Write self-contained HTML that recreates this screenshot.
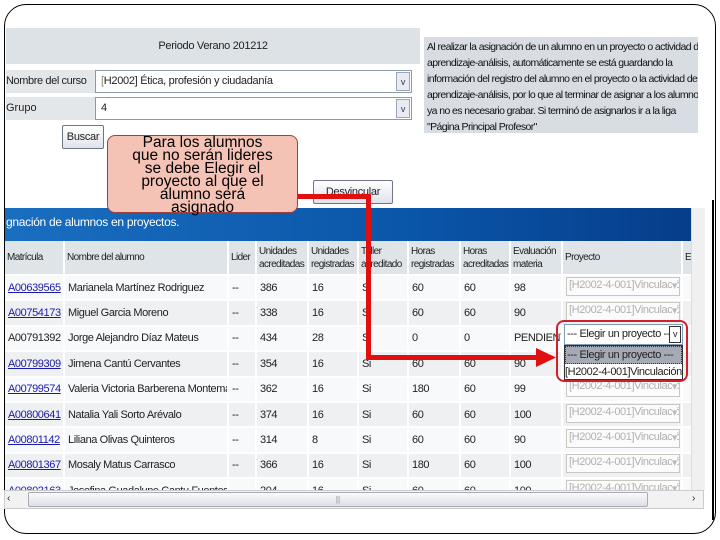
<!DOCTYPE html>
<html><head><meta charset="utf-8"><style>
*{margin:0;padding:0;box-sizing:border-box}
body{width:720px;height:540px;background:#fff;position:relative;overflow:hidden;font-family:"Liberation Sans",sans-serif;font-size:11px;color:#222}
.a{position:absolute}
.sel{position:absolute;background:#fff;border:1px solid #8a9aab;height:23px;font-size:11px;letter-spacing:-0.3px;padding:4px 5px;white-space:nowrap}
.sel .ar{position:absolute;right:1px;top:1px;width:14px;height:19px;background:#e8ecf2;border:1px solid #9aa6b6;font-size:9px;text-align:center;line-height:18px;color:#335}
.btn{position:absolute;background:linear-gradient(#fff,#dfe3ea);border:1px solid #6d7787;border-radius:2px;font-size:11px;letter-spacing:-0.3px;text-align:center;line-height:22px;overflow:hidden;white-space:nowrap}
.wrap{position:absolute;left:5px;top:241px;width:686px;height:249px;overflow:hidden}
table{border-collapse:collapse;font-size:11px;letter-spacing:-0.4px;table-layout:fixed;width:702px}
td{height:25.4px;padding:0 3px;border-right:2px solid #fff;border-bottom:2px solid #fff;white-space:nowrap;overflow:hidden}
tr:nth-child(odd) td{background:#eef0f2}
tr:nth-child(even) td{background:#f8f9fa}
tr.h td{background:#dfe4e8;height:34px;line-height:13px;white-space:normal;font-size:10px;letter-spacing:-0.6px;padding:0 2px}
a{color:#1a1aa8}
.ds{display:inline-block;width:114px;border:1px solid #c8c8c0;color:#b0b0b0;padding:1px 2px;font-size:11px;position:relative;background:#fbfbfb;overflow:hidden;height:19px}
.ds:after{content:"▾";position:absolute;right:2px;top:1px;color:#bbb;background:#fbfbfb}
</style></head><body>
<div class="a" style="left:4px;top:4px;width:712px;height:530px;border:1px solid #000;border-radius:22px"></div>
<div class="a" style="left:6px;top:28px;width:414px;height:36px;background:#dde2e6;text-align:center;line-height:36px;font-size:11px;letter-spacing:-0.3px">Periodo Verano 201212</div>
<div class="a" style="left:6px;top:70px;width:89px;height:23px;background:#e3e7ea;font-size:11px;letter-spacing:-0.4px;line-height:23px;white-space:nowrap">Nombre del curso</div>
<div class="sel" style="left:95px;top:70px;width:317px"><span style="color:#886">[</span>H2002] Ética, profesión y ciudadanía<div class="ar">v</div></div>
<div class="a" style="left:6px;top:97px;width:89px;height:23px;background:#e3e7ea;font-size:11px;line-height:23px">Grupo</div>
<div class="sel" style="left:95px;top:97px;width:317px">4<div class="ar">v</div></div>
<div class="btn" style="left:62px;top:125px;width:42px;height:24px">Buscar</div>
<div class="btn" style="left:313px;top:180px;width:80px;height:24px">Desvincular</div>
<div class="a" style="left:424px;top:37px;width:274px;height:96px;background:#d8dde3;font-size:10.5px;letter-spacing:-0.6px;line-height:16px;padding:2px 3px;color:#111;white-space:nowrap;overflow:hidden">Al realizar la asignación de un alumno en un proyecto o actividad de<br>aprendizaje-análisis, automáticamente se está guardando la<br>información del registro del alumno en el proyecto o la actividad de<br>aprendizaje-análisis, por lo que al terminar de asignar a los alumnos<br>ya no es necesario grabar. Si terminó de asignarlos ir a la liga<br>"Página Principal Profesor"</div>
<div class="a" style="left:5px;top:208px;width:686px;height:33px;background:linear-gradient(90deg,#1a6ec0,#0a55a8 60%,#063d8a);color:#fff;font-size:12px;letter-spacing:-0.3px;line-height:28px;padding-left:1px">gnación de alumnos en proyectos.</div>
<div class="a" style="left:691px;top:208px;width:14px;height:282px;background:#f0f0f0;border-left:1px solid #ddd"></div>
<div class="wrap"><table>
<colgroup><col style="width:59px"><col style="width:164px"><col style="width:28px"><col style="width:52px"><col style="width:50px"><col style="width:50px"><col style="width:52px"><col style="width:50px"><col style="width:52px"><col style="width:120px"><col style="width:25px"></colgroup>
<tr class="h"><td>Matrícula</td><td>Nombre del alumno</td><td>Lider</td><td>Unidades acreditadas</td><td>Unidades registradas</td><td>Taller acreditado</td><td>Horas registradas</td><td>Horas acreditadas</td><td>Evaluación materia</td><td>Proyecto</td><td>Ex</td></tr>
<tr><td><a href="#">A00639565</a></td><td>Marianela Martínez Rodriguez</td><td>--</td><td>386</td><td>16</td><td>Si</td><td>60</td><td>60</td><td>98</td><td><span class="ds">[H2002-4-001]Vinculació</span></td><td></td></tr>
<tr><td><a href="#">A00754173</a></td><td>Miguel Garcia Moreno</td><td>--</td><td>338</td><td>16</td><td>Si</td><td>60</td><td>60</td><td>90</td><td><span class="ds">[H2002-4-001]Vinculació</span></td><td></td></tr>
<tr><td>A00791392</td><td>Jorge Alejandro Díaz Mateus</td><td>--</td><td>434</td><td>28</td><td>Si</td><td>0</td><td>0</td><td>PENDIENTE</td><td></td><td></td></tr>
<tr><td><a href="#">A00799309</a></td><td>Jimena Cantú Cervantes</td><td>--</td><td>354</td><td>16</td><td>Si</td><td>60</td><td>60</td><td>90</td><td></td><td></td></tr>
<tr><td><a href="#">A00799574</a></td><td>Valeria Victoria Barberena Montemayor</td><td>--</td><td>362</td><td>16</td><td>Si</td><td>180</td><td>60</td><td>99</td><td><span class="ds">[H2002-4-001]Vinculació</span></td><td></td></tr>
<tr><td><a href="#">A00800641</a></td><td>Natalia Yali Sorto Arévalo</td><td>--</td><td>374</td><td>16</td><td>Si</td><td>60</td><td>60</td><td>100</td><td><span class="ds">[H2002-4-001]Vinculació</span></td><td></td></tr>
<tr><td><a href="#">A00801142</a></td><td>Liliana Olivas Quinteros</td><td>--</td><td>314</td><td>8</td><td>Si</td><td>60</td><td>60</td><td>90</td><td><span class="ds">[H2002-4-001]Vinculació</span></td><td></td></tr>
<tr><td><a href="#">A00801367</a></td><td>Mosaly Matus Carrasco</td><td>--</td><td>366</td><td>16</td><td>Si</td><td>180</td><td>60</td><td>100</td><td><span class="ds">[H2002-4-001]Vinculació</span></td><td></td></tr>
<tr><td><a href="#">A00802163</a></td><td>Josefina Guadalupe Cantu Fuentes</td><td>--</td><td>204</td><td>16</td><td>Si</td><td>60</td><td>60</td><td>100</td><td><span class="ds">[H2002-4-001]Vinculació</span></td><td></td></tr>
</table></div>
<div class="a" style="left:4px;top:490px;width:700px;height:19px;background:#f2f2f2;border:1px solid #ccc"></div>
<div class="a" style="left:28px;top:492px;width:620px;height:15px;background:linear-gradient(#fafafa,#dde0e4);border:1px solid #aab;border-radius:2px;text-align:center;font-size:8px;line-height:13px;color:#888">||</div>
<div class="a" style="left:7px;top:493px;font-size:10px">‹</div>
<div class="a" style="left:692px;top:493px;font-size:10px">›</div>
<div class="a" style="left:712px;top:200px;width:2px;height:320px;background:#000"></div>
<div class="a" style="left:564px;top:324px;width:119px;height:21px;background:#fff;border:1px solid #7f9db9;font-size:11px;letter-spacing:-0.4px;line-height:19px;padding-left:2px;white-space:nowrap;overflow:hidden">--- Elegir un proyecto ---<div style="position:absolute;right:1px;top:1px;width:12px;height:17px;border:1px solid #333;font-size:9px;text-align:center;line-height:15px;background:#fff">v</div></div>
<div class="a" style="left:564px;top:345px;width:119px;height:35px;background:#fff;border:1px solid #333;font-size:11px;letter-spacing:-0.4px;line-height:16px;overflow:hidden;white-space:nowrap"><div style="background:#a5aab4;border:1px dotted #333;padding-left:1px">--- Elegir un proyecto ---</div><div>[H2002-4-001]Vinculación s</div></div>
<div class="a" style="left:556px;top:320px;width:132px;height:62px;border:2px solid #d0202a;border-radius:8px"></div>
<div class="a" style="left:298px;top:194px;width:73px;height:5px;background:#e01010"></div>
<div class="a" style="left:366px;top:194px;width:5px;height:166px;background:#e01010"></div>
<div class="a" style="left:366px;top:355px;width:176px;height:5px;background:#e01010"></div>
<svg class="a" style="left:536px;top:348px" width="22" height="20"><polygon points="0,0 20,9.5 0,19" fill="#e01010"/></svg>
<div class="a" style="left:107px;top:135px;width:191px;height:78px;background:#f5c3b6;border:1px solid #a0403a;border-radius:8px;font-size:15.5px;line-height:13px;text-align:center;color:#000">Para los alumnos<br>que no serán lideres<br>se debe Elegir el<br>proyecto al que el<br>alumno será<br>asignado</div>
</body></html>
